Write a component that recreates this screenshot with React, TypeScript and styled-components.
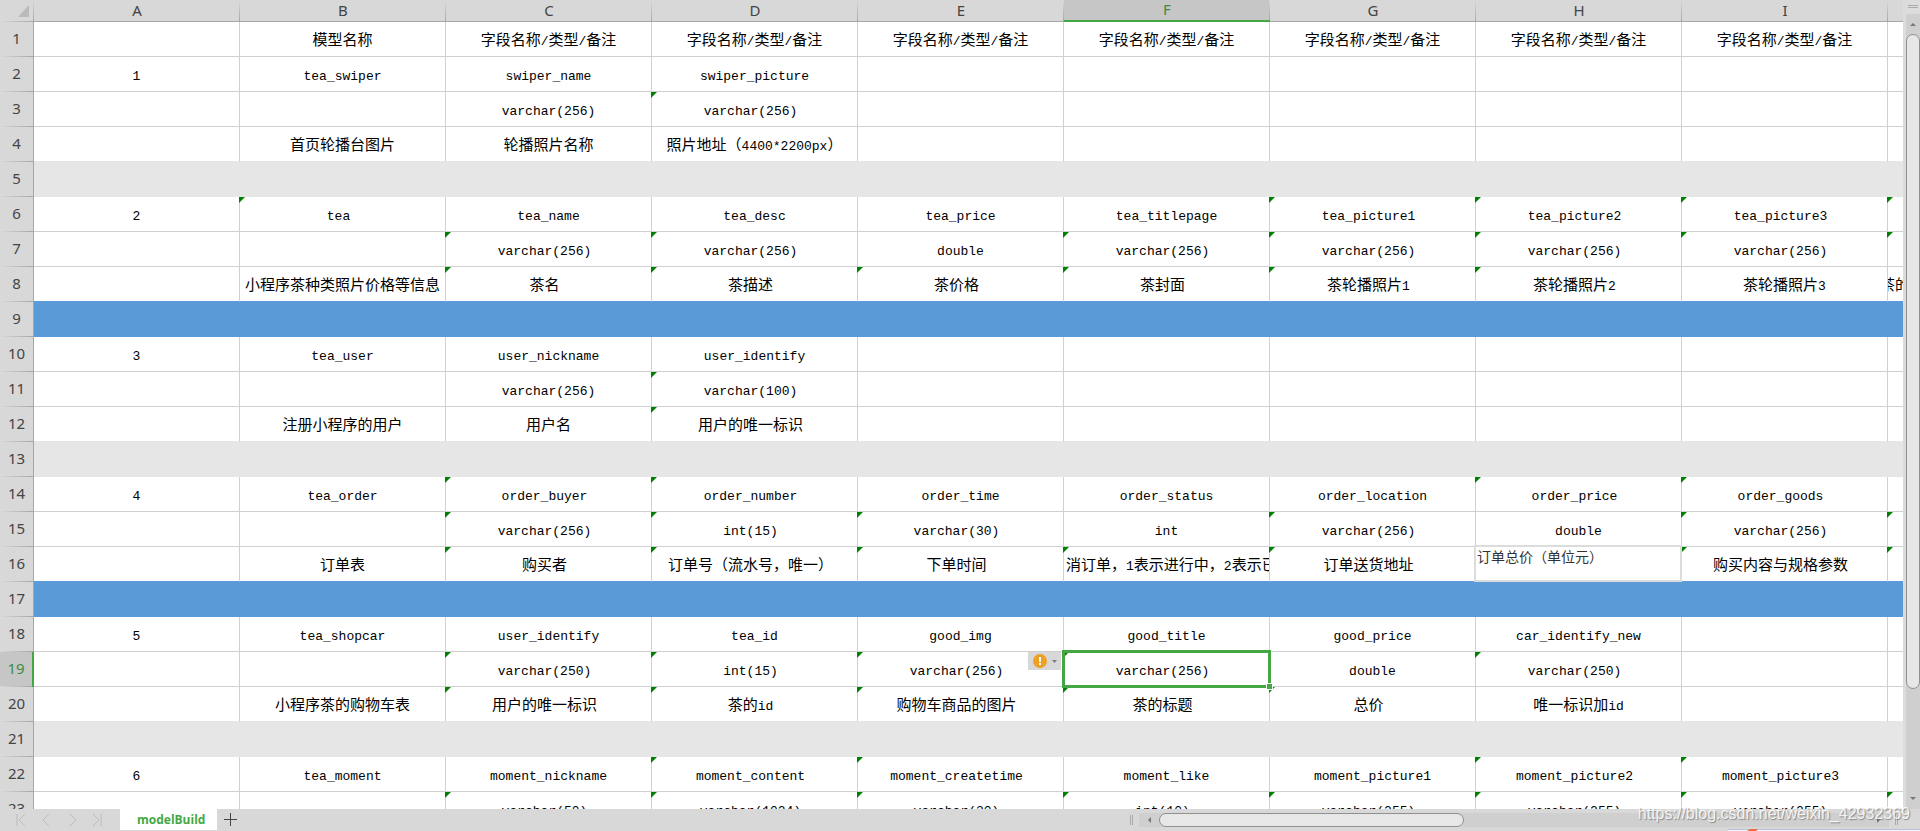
import React from 'react';
import styled, { createGlobalStyle, css } from 'styled-components';

const GREEN = '#43a843';
const CHROME = '#d8d8d8';
const RULE = '#a6a6a6';
const GRID = '#d0d0d0';
const GREY_FILL = '#e6e6e6';
const BLUE_FILL = '#5a9bd7';

const GlobalStyle = createGlobalStyle`
  *, *::after { box-sizing: border-box; }
  body {
    margin: 0;
    overflow: hidden;
    background: ${CHROME};
    font-family: "Noto Sans", "Noto Sans CJK SC", sans-serif;
  }
  button { margin: 0; padding: 0; border: 0; background: none; font: inherit; }
`;

const Workbook = styled.div`
  position: relative;
  display: flex;
  flex-direction: column;
  height: 100vh;
  overflow: hidden;
`;

const SheetArea = styled.div`
  display: flex;
  flex: 1;
  min-height: 0;
`;

const SheetView = styled.main`
  flex: 1;
  min-width: 0;
  overflow: hidden;
  background: #fff;
`;

const Grid = styled.table`
  table-layout: fixed;
  width: 0;
  border-collapse: separate;
  border-spacing: 0;
`;

const RowHeadCol = styled.col`
  width: 34px;
`;

const DataCol = styled.col`
  width: 206px;
`;

const Corner = styled.th`
  height: 22px;
  padding: 0;
  background:
    linear-gradient(to bottom, ${CHROME}, ${RULE}) right / 1px 100% no-repeat,
    linear-gradient(to right, ${CHROME}, ${RULE}) bottom / 100% 1px no-repeat,
    ${CHROME};
  svg { display: block; margin-left: 18px; }
`;

const ColumnHead = styled.th<{ $active: boolean }>`
  height: 22px;
  padding: 0 0 2px;
  border-bottom: 1px solid ${RULE};
  background:
    linear-gradient(to bottom, ${CHROME}, ${RULE}) right / 1px 100% no-repeat,
    ${CHROME};
  color: #444;
  font-size: 15px;
  font-weight: 400;
  line-height: 18px;
  ${p => p.$active && css`
    border-bottom: 2px solid ${GREEN};
    background-color: #c6c6c6;
    color: #3c8a44;
  `}
`;

const RowHead = styled.th<{ $active: boolean }>`
  height: 35px;
  padding: 0 0 3px;
  border-right: 1px solid ${RULE};
  background:
    linear-gradient(to right, ${CHROME}, ${RULE}) bottom / 100% 1px no-repeat,
    ${CHROME};
  color: #444;
  font-size: 15px;
  font-weight: 400;
  line-height: 20px;
  ${p => p.$active && css`
    border-right: 2px solid ${GREEN};
    background-color: #c6c6c6;
    color: #3c8a44;
  `}
`;

const DataCell = styled.td<{ $rule: string }>`
  position: relative;
  height: 35px;
  padding: 0;
  border-right: 1px solid ${GRID};
  border-bottom: 1px solid ${p => p.$rule};
`;

const FillCell = styled.td<{ $fill: string }>`
  height: 35px;
  padding: 0;
  background: ${p => p.$fill};
`;

type Align = 'center' | 'start' | 'cut';

const CellText = styled.div<{ $flagged: boolean; $align: Align }>`
  height: 34px;
  padding-right: ${p => (p.$flagged && p.$align === 'center' ? 8 : 0)}px;
  padding-left: ${p => (p.$align === 'start' ? 2 : 0)}px;
  text-align: ${p => (p.$align === 'center' ? 'center' : 'left')};
  text-indent: ${p => (p.$align === 'cut' ? -8 : 0)}px;
  overflow: hidden;
  color: #000;
  font-family: "Noto Sans CJK SC", sans-serif;
  font-size: 15px;
  line-height: 34px;
  white-space: pre;
`;

const Latin = styled.span`
  font-family: "Liberation Mono", monospace;
  font-size: 13px;
  line-height: 1;
`;

const Flag = styled.i`
  position: absolute;
  top: 0;
  left: -1px;
  width: 6px;
  height: 6px;
  background: #008000;
  clip-path: polygon(0 0, 100% 0, 0 100%);
`;

const Selection = styled.div`
  position: absolute;
  z-index: 2;
  inset: -2px;
  border: 3px solid ${GREEN};
  &::after {
    content: "";
    position: absolute;
    right: -5px;
    bottom: -5px;
    width: 7px;
    height: 7px;
    border: 1px solid #fff;
    background: ${GREEN};
  }
`;

const WarningButton = styled.button`
  position: absolute;
  z-index: 2;
  top: 0;
  left: -36px;
  display: flex;
  align-items: center;
  gap: 5px;
  width: 33px;
  height: 18px;
  padding-left: 5px;
  background: ${CHROME};
`;

const NoteBox = styled.textarea`
  position: absolute;
  z-index: 1;
  top: -2px;
  left: -2px;
  width: 208px;
  height: 37px;
  padding: 0 1px;
  border: 2px solid #dcdcdc;
  border-radius: 0;
  outline: 0;
  resize: none;
  overflow: hidden;
  background: #fff;
  color: #333;
  font-family: "Noto Sans CJK SC", sans-serif;
  font-size: 14px;
  line-height: 18px;
`;

const VerticalRail = styled.div`
  display: flex;
  flex-direction: column;
  width: 17px;
  padding-left: 3px;
  background: #dcdcdc;
`;

const SplitHandle = styled.div<{ $vertical?: boolean }>`
  flex: none;
  ${p => p.$vertical
    ? css`width: 3px; height: 10px; border: solid #ababab; border-width: 0 1px;`
    : css`width: 10px; height: 3px; margin: 5px 2px 6px; border: solid #ababab; border-width: 1px 0;`}
`;

const Track = styled.div<{ $horizontal?: boolean }>`
  display: flex;
  flex: 1;
  flex-direction: ${p => (p.$horizontal ? 'row' : 'column')};
  ${p => p.$horizontal && 'height: 14px;'}
  min-height: 0;
  background: #cfcfcf;
`;

const ArrowButton = styled.button`
  display: flex;
  flex: 0 0 20px;
  align-items: center;
  justify-content: center;
`;

const Thumb = styled.div<{ $size: number }>`
  flex: ${p => p.$size} 0 0;
  border: 1px solid #909090;
  border-radius: 7px;
  background: #e7e7e7;
`;

const Remainder = styled.div<{ $size: number }>`
  flex: ${p => p.$size} 0 0;
`;

const BottomBar = styled.footer`
  display: flex;
  height: 22px;
  background: ${CHROME};
`;

const TabStrip = styled.nav`
  display: flex;
  flex: 1126 0 0;
  align-items: flex-start;
  min-width: 0;
`;

const NavButtons = styled.div`
  display: flex;
  justify-content: space-between;
  width: 120px;
  padding: 4px 16px;
`;

const NavButton = styled.button`
  display: flex;
  width: 14px;
  height: 14px;
  color: #bcbcbc;
`;

const SheetTab = styled.button`
  height: 21px;
  padding: 0 12px 0 17px;
  background: #fff;
  color: ${GREEN};
  font-family: "Open Sans", sans-serif;
  font-size: 12px;
  font-weight: 700;
  line-height: 22px;
`;

const AddTab = styled.button`
  display: flex;
  align-items: center;
  margin-left: 7px;
  height: 21px;
`;

const HorizontalRail = styled.div`
  display: flex;
  flex: 768 0 0;
  align-items: center;
  gap: 6px;
  padding: 0 22px 0 4px;
  min-width: 0;
`;

const Watermark = styled.div`
  position: absolute;
  z-index: 3;
  right: 10px;
  bottom: 7px;
  color: rgba(255, 255, 255, 0.85);
  font-family: "Liberation Sans", sans-serif;
  font-size: 16px;
  line-height: 20px;
  text-shadow: 1px 1px 1px rgba(90, 90, 90, 0.6);
  pointer-events: none;
`;

const Peek = styled.div`
  position: absolute;
  z-index: 3;
  right: 0;
  bottom: 0;
  display: flex;
  width: 192px;
  height: 2px;
  padding-left: 18px;
  border-top: 1px solid #b4c4d4;
  background: #f2f6fa;
  svg { display: block; margin-top: -1px; }
`;

const COLUMNS = ['A', 'B', 'C', 'D', 'E', 'F', 'G', 'H', 'I', 'J'];
const FIELD = '字段名称/类型/备注';

/* A leading "!" marks a cell that carries the green error flag. */
type Row = string[] | { fill: string };
const GREY: Row = { fill: GREY_FILL };
const BLUE: Row = { fill: BLUE_FILL };

const ROWS: Row[] = [
  ['', '模型名称', FIELD, FIELD, FIELD, FIELD, FIELD, FIELD, FIELD, ''],
  ['1', 'tea_swiper', 'swiper_name', 'swiper_picture', '', '', '', '', '', ''],
  ['', '', 'varchar(256)', '!varchar(256)', '', '', '', '', '', ''],
  ['', '首页轮播台图片', '轮播照片名称', '照片地址（4400*2200px）', '', '', '', '', '', ''],
  GREY,
  ['2', '!tea', 'tea_name', 'tea_desc', 'tea_price', 'tea_titlepage', '!tea_picture1', '!tea_picture2', '!tea_picture3', '!'],
  ['', '', '!varchar(256)', '!varchar(256)', 'double', '!varchar(256)', '!varchar(256)', '!varchar(256)', '!varchar(256)', '!'],
  ['', '小程序茶种类照片价格等信息', '!茶名', '!茶描述', '!茶价格', '!茶封面', '!茶轮播照片1', '!茶轮播照片2', '茶轮播照片3', '茶的'],
  BLUE,
  ['3', 'tea_user', 'user_nickname', 'user_identify', '', '', '', '', '', ''],
  ['', '', 'varchar(256)', '!varchar(100)', '', '', '', '', '', ''],
  ['', '注册小程序的用户', '用户名', '!用户的唯一标识', '', '', '', '', '', ''],
  GREY,
  ['4', 'tea_order', '!order_buyer', '!order_number', 'order_time', 'order_status', 'order_location', '!order_price', '!order_goods', ''],
  ['', '', '!varchar(256)', '!int(15)', '!varchar(30)', 'int', '!varchar(256)', 'double', '!varchar(256)', '!'],
  ['', '订单表', '!购买者', '!订单号（流水号，唯一）', '!下单时间', '!消订单，1表示进行中，2表示已', '!订单送货地址', '', '!购买内容与规格参数', '!'],
  BLUE,
  ['5', 'tea_shopcar', 'user_identify', 'tea_id', 'good_img', 'good_title', 'good_price', 'car_identify_new', '', ''],
  ['', '', '!varchar(250)', '!int(15)', '!varchar(256)', '!varchar(256)', 'double', '!varchar(250)', '', ''],
  ['', '小程序茶的购物车表', '!用户的唯一标识', '!茶的id', '!购物车商品的图片', '!茶的标题', '!总价', '唯一标识加id', '', ''],
  GREY,
  ['6', 'tea_moment', 'moment_nickname', '!moment_content', '!moment_createtime', 'moment_like', 'moment_picture1', '!moment_picture2', '!moment_picture3', ''],
  ['', '', '!varchar(50)', '!varchar(1024)', '!varchar(30)', '!int(10)', '!varchar(255)', '!varchar(255)', '!varchar(255)', '!'],
];

const ALIGNMENTS: Record<string, Align> = { F16: 'start', J8: 'cut' };
const ACTIVE = { column: 'F', row: 19 };

function MixedText({ text }: { text: string }) {
  return (
    <>
      {text.split(/([\x20-\x7e]+)/).filter(Boolean).map((run, i) =>
        /^[\x20-\x7e]/.test(run) ? <Latin key={i}>{run}</Latin> : <span key={i}>{run}</span>,
      )}
    </>
  );
}

function Cell({ id, value, rule }: { id: string; value: string; rule: string }) {
  const flagged = value.startsWith('!');
  const text = flagged ? value.slice(1) : value;
  return (
    <DataCell $rule={rule}>
      {text && (
        <CellText $flagged={flagged} $align={ALIGNMENTS[id] ?? 'center'}>
          <MixedText text={text} />
        </CellText>
      )}
      {flagged && <Flag />}
      {id === 'H16' && <NoteBox aria-label="H16" defaultValue="订单总价（单位元）" />}
      {id === `${ACTIVE.column}${ACTIVE.row}` && (
        <>
          <Selection />
          <WarningButton aria-label="错误检查选项">
            <svg width="14" height="14" viewBox="0 0 14 14">
              <circle cx="7" cy="7" r="7" fill="#eea023" />
              <path d="M6 3h2v5H6zM6 9h2v2H6z" fill="#fff" />
            </svg>
            <svg width="5" height="3" viewBox="0 0 5 3"><path d="M0 0h5L2.5 3z" fill="#7c7c7c" /></svg>
          </WarningButton>
        </>
      )}
    </DataCell>
  );
}

function Arrow({ d, label }: { d: string; label: string }) {
  return (
    <ArrowButton aria-label={label}>
      <svg width="6" height="6" viewBox="0 0 6 6"><path d={d} fill="#777" /></svg>
    </ArrowButton>
  );
}

const NAV_ICONS = [
  { label: '第一个工作表', d: 'M1 1v12M9 1L3 7l6 6' },
  { label: '上一个工作表', d: 'M8 1L2 7l6 6' },
  { label: '下一个工作表', d: 'M5 1l6 6-6 6' },
  { label: '最后一个工作表', d: 'M3 1l6 6-6 6M11 1v12' },
];

export default function App() {
  return (
    <Workbook>
      <GlobalStyle />
      <SheetArea>
        <SheetView>
          <Grid>
            <colgroup>
              <RowHeadCol />
              {COLUMNS.map(c => <DataCol key={c} />)}
            </colgroup>
            <thead>
              <tr>
                <Corner aria-label="全选">
                  <svg width="11" height="12" viewBox="0 0 11 12"><path d="M11 0v12H0z" fill="#bababa" /></svg>
                </Corner>
                {COLUMNS.map(c => (
                  <ColumnHead key={c} scope="col" $active={c === ACTIVE.column}>{c === 'J' ? '' : c}</ColumnHead>
                ))}
              </tr>
            </thead>
            <tbody>
              {ROWS.map((row, r) => {
                const next = ROWS[r + 1];
                const rule = next && !Array.isArray(next) ? next.fill : GRID;
                return (
                  <tr key={r}>
                    <RowHead scope="row" $active={r + 1 === ACTIVE.row}>{r + 1}</RowHead>
                    {Array.isArray(row)
                      ? row.map((value, c) => (
                          <Cell key={c} id={`${COLUMNS[c]}${r + 1}`} value={value} rule={rule} />
                        ))
                      : <FillCell $fill={row.fill} colSpan={COLUMNS.length} />}
                  </tr>
                );
              })}
            </tbody>
          </Grid>
        </SheetView>
        <VerticalRail>
          <SplitHandle />
          <Track>
            <Arrow label="向上滚动" d="M0 5l3-3 3 3z" />
            <Thumb $size={655} />
            <Remainder $size={100} />
            <Arrow label="向下滚动" d="M0 1h6L3 4z" />
          </Track>
        </VerticalRail>
      </SheetArea>
      <BottomBar>
        <TabStrip>
          <NavButtons>
            {NAV_ICONS.map(icon => (
              <NavButton key={icon.label} aria-label={icon.label}>
                <svg width="14" height="14" viewBox="0 0 14 14" fill="none" stroke="currentColor"><path d={icon.d} /></svg>
              </NavButton>
            ))}
          </NavButtons>
          <SheetTab>modelBuild</SheetTab>
          <AddTab aria-label="新建工作表">
            <svg width="13" height="13" viewBox="0 0 13 13"><path d="M6 0h1v6h6v1H7v6H6V7H0V6h6z" fill="#444" /></svg>
          </AddTab>
        </TabStrip>
        <HorizontalRail>
          <SplitHandle $vertical />
          <Track $horizontal>
            <Arrow label="向左滚动" d="M5 0v6L2 3z" />
            <Thumb $size={304} />
            <Remainder $size={406} />
            <Arrow label="向右滚动" d="M1 0l3 3-3 3z" />
          </Track>
          <SplitHandle $vertical />
        </HorizontalRail>
      </BottomBar>
      <Peek>
        <svg width="14" height="2" viewBox="0 0 14 2"><path d="M4 0h8l-2 2H1z" fill="#f26b3a" /></svg>
      </Peek>
      <Watermark>https://blog.csdn.net/weixin_42932369</Watermark>
    </Workbook>
  );
}
